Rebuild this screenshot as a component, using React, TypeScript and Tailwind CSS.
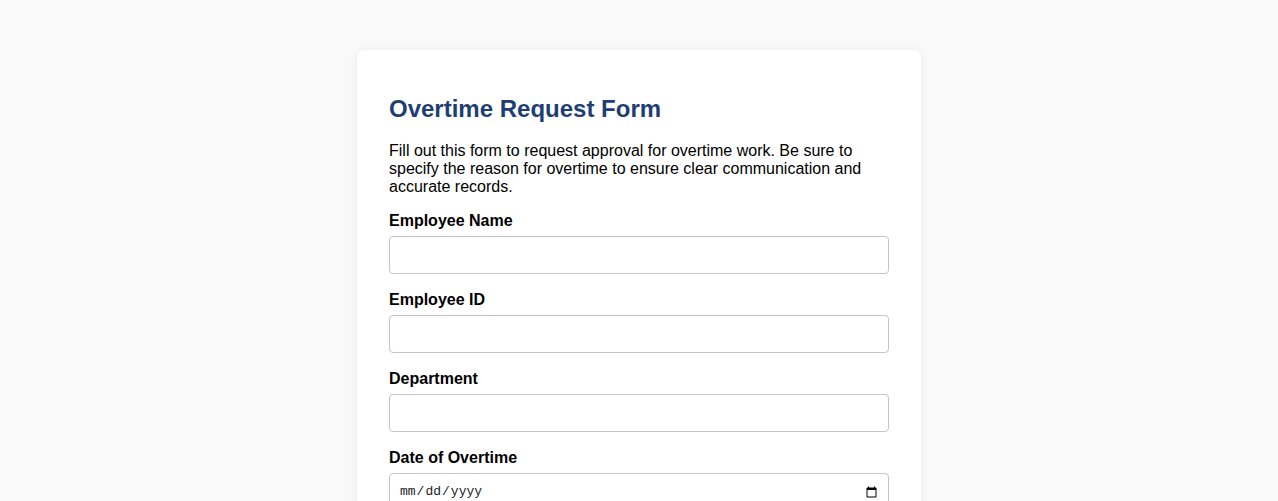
export default function App() {
  const fields = [
    { id: "name", label: "Employee Name", type: "text" },
    { id: "empid", label: "Employee ID", type: "text" },
    { id: "dept", label: "Department", type: "text" },
    { id: "date", label: "Date of Overtime", type: "date" },
  ];

  return (
    <div className="min-h-screen bg-[#f9f9f9] pt-[50px] pb-10 font-['Liberation_Sans',Arial,sans-serif] text-black">
      <div className="mx-auto w-[564px] rounded-lg bg-white px-8 pt-[45px] pb-8 shadow-[0_0_10px_rgba(0,0,0,0.06)]">
        <h1 className="mb-[19px] text-[24px] leading-[28px] font-bold text-[#1f3f74]">
          Overtime Request Form
        </h1>
        <p className="mb-4 text-[16px] leading-[18px]">
          Fill out this form to request approval for overtime work. Be sure to specify the reason for overtime to
          ensure clear communication and accurate records.
        </p>
        <form className="flex flex-col gap-[17px]">
          {fields.map((f) => (
            <div key={f.id} className="flex flex-col">
              <label htmlFor={f.id} className="mb-[6px] text-[16px] leading-[18px] font-bold">
                {f.label}
              </label>
              <input
                id={f.id}
                type={f.type}
                className={
                  f.type === "date"
                    ? "h-[38px] w-full rounded-[4px] border border-[#c4c4cc] pl-[9px] pr-2 font-['Liberation_Mono',monospace] text-[13px] text-[#222] outline-none"
                    : "h-[38px] w-full rounded-[4px] border border-[#c4c4cc] px-2 text-[13px] outline-none"
                }
              />
            </div>
          ))}
        </form>
      </div>
    </div>
  );
}
